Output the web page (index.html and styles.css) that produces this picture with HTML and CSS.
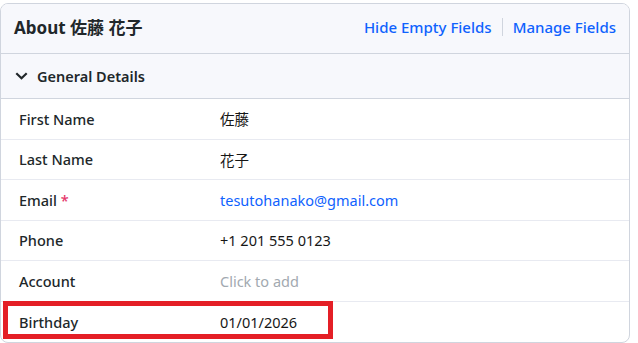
FILE: index.html
```html
<!DOCTYPE html>
<html lang="ja">
<head>
  <meta charset="UTF-8">
  <title>About 佐藤 花子</title>
  <link rel="stylesheet" href="styles.css">
</head>
<body>

<div class="card">
  <div class="card-header">
    <h1>About 佐藤 花子</h1>
    <div class="header-links">
      <a href="#">Hide Empty Fields</a>
      <span class="divider"></span>
      <a href="#">Manage Fields</a>
    </div>
  </div>

  <div class="section-header">
    <svg class="chevron" width="13" height="8" viewBox="0 0 13 8">
      <path d="M1.3 1.3 L6.5 6.3 L11.7 1.3" fill="none" stroke="#21272a" stroke-width="2.2"/>
    </svg>
    <span>General Details</span>
  </div>

  <div class="field-row">
    <div class="label">First Name</div>
    <div class="value">佐藤</div>
  </div>
  <div class="field-row">
    <div class="label">Last Name</div>
    <div class="value">花子</div>
  </div>
  <div class="field-row">
    <div class="label">Email <span class="required">*</span></div>
    <div class="value link">tesutohanako@gmail.com</div>
  </div>
  <div class="field-row">
    <div class="label">Phone</div>
    <div class="value">+1 201 555 0123</div>
  </div>
  <div class="field-row">
    <div class="label">Account</div>
    <div class="value empty">Click to add</div>
  </div>
  <div class="field-row last">
    <div class="label">Birthday</div>
    <div class="value">01/01/2026</div>
    <div class="highlight"></div>
  </div>
</div>

</body>
</html>
```

FILE: styles.css
```css
* {
  margin: 0;
  padding: 0;
  box-sizing: border-box;
  font-family: 'Noto Sans', 'Noto Sans CJK JP', sans-serif;
}

body {
  background-color: #fff;
  padding-top: 3px;
}

.card {
  width: 630px;
  border: 1px solid #d0d5de;
  border-radius: 8px;
  overflow: hidden;
  background: #fff;
}

.card-header {
  height: 50px;
  display: flex;
  align-items: center;
  justify-content: space-between;
  padding: 0 13px 4px 13px;
  background-color: #f7f8fc;
  border-bottom: 1px solid #d0d5de;
}

.card-header h1 {
  font-size: 17px;
  font-weight: 700;
  color: #21272a;
}

.header-links {
  display: flex;
  align-items: center;
  gap: 10px;
}

.header-links a {
  color: #0f62fe;
  text-decoration: none;
  font-size: 15px;
  font-weight: 500;
}

.divider {
  width: 1px;
  height: 18px;
  background-color: #d0d5de;
}

.section-header {
  height: 45px;
  display: flex;
  align-items: center;
  gap: 9px;
  padding-left: 14px;
  background-color: #f7f8fc;
  border-bottom: 1px solid #d0d5de;
  font-size: 14.5px;
  font-weight: 600;
  color: #21272a;
}

.field-row {
  position: relative;
  height: 40.5px;
  display: flex;
  align-items: center;
  border-bottom: 1px solid #e8eaf1;
  font-size: 14.5px;
}

.field-row.last {
  border-bottom: none;
}

.label {
  width: 219px;
  padding-left: 18px;
  font-weight: 500;
  color: #21272a;
}

.value {
  color: #161616;
}

.value.link {
  color: #0f62fe;
}

.value.empty {
  color: #a2a9b0;
}

.required {
  color: #e5366a;
}

.highlight {
  position: absolute;
  left: 2px;
  top: -1px;
  width: 330px;
  height: 38px;
  border: 5px solid #e41f26;
}
```
